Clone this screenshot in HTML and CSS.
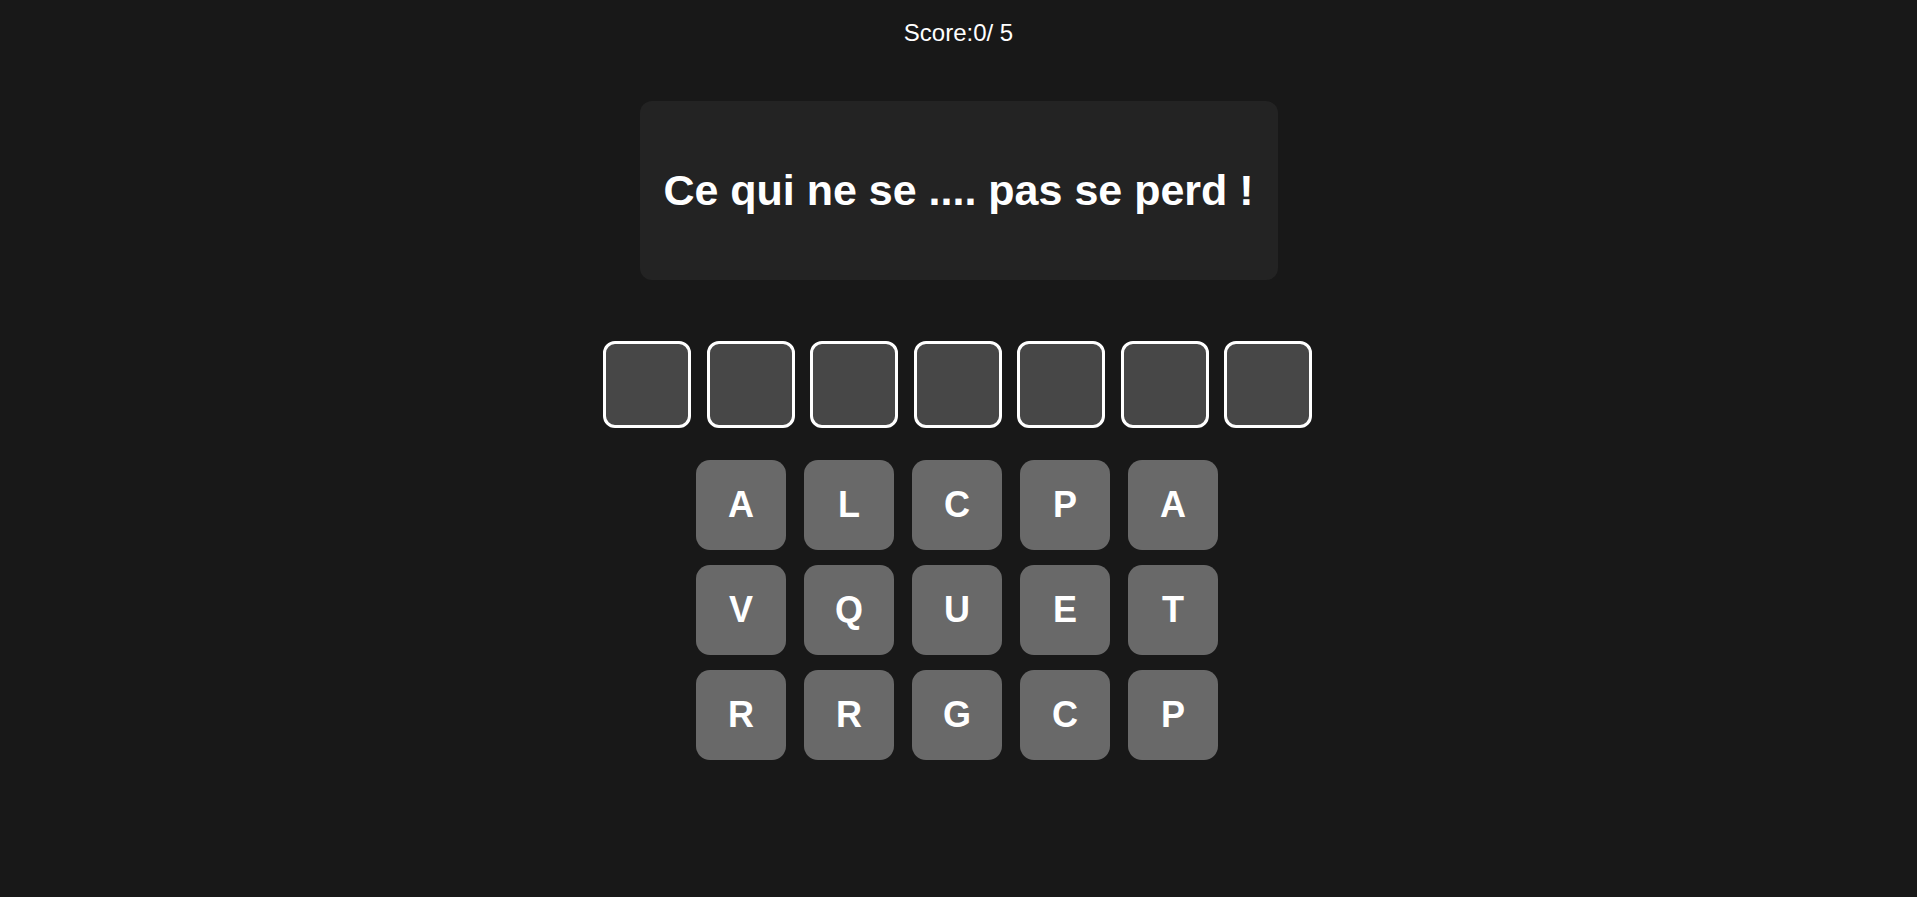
FILE: index.html
```html
<!DOCTYPE html>
<html lang="fr">
<head>
<meta charset="utf-8">
<title>Jeu</title>
<link rel="stylesheet" href="styles.css">
</head>
<body>
<main class="game">
  <div class="score">Score:0/ 5</div>
  <div class="card"><h2 class="phrase">Ce qui ne se .... pas se perd !</h2></div>
  <div class="slots">
    <div class="slot"></div><div class="slot"></div><div class="slot"></div><div class="slot"></div><div class="slot"></div><div class="slot"></div><div class="slot"></div>
  </div>
  <div class="keys">
    <button class="key">A</button><button class="key">L</button><button class="key">C</button><button class="key">P</button><button class="key">A</button>
    <button class="key">V</button><button class="key">Q</button><button class="key">U</button><button class="key">E</button><button class="key">T</button>
    <button class="key">R</button><button class="key">R</button><button class="key">G</button><button class="key">C</button><button class="key">P</button>
  </div>
</main>
</body>
</html>
```
FILE: styles.css
```css
html, body {
  margin: 0;
  padding: 0;
  background: #181818;
  color: #fff;
  font-family: "Liberation Sans", Arial, sans-serif;
}
.game {
  display: flex;
  flex-direction: column;
  align-items: center;
  padding-top: 19px;
}
.score {
  font-size: 24px;
  line-height: 28px;
}
.card {
  margin-top: 54px;
  background: #232323;
  border-radius: 12px;
  width: 638px;
  height: 179px;
  box-sizing: border-box;
  display: flex;
  align-items: center;
  justify-content: center;
}
.phrase {
  margin: 0;
  font-size: 43px;
  font-weight: bold;
  white-space: nowrap;
}
.slots {
  margin-top: 61px;
  margin-right: 2px;
  display: flex;
  gap: 15.5px;
}
.slot {
  width: 88px;
  height: 87px;
  box-sizing: border-box;
  border: 3px solid #fff;
  border-radius: 12px;
  background: #474747;
}
.keys {
  margin-top: 32px;
  margin-right: 3px;
  display: grid;
  grid-template-columns: repeat(5, 90px);
  column-gap: 18px;
  row-gap: 15px;
}
.key {
  width: 90px;
  height: 90px;
  border: none;
  border-radius: 14px;
  background: #696969;
  color: #fff;
  font-family: "Liberation Sans", Arial, sans-serif;
  font-size: 36px;
  font-weight: bold;
  padding: 0;
}
```
